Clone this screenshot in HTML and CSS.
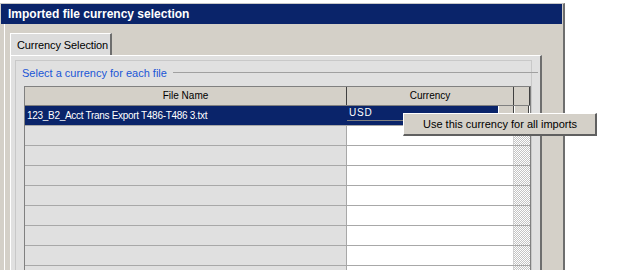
FILE: index.html
```html
<!DOCTYPE html>
<html>
<head>
<meta charset="utf-8">
<link rel="stylesheet" href="styles.css">
</head>
<body>
<div class="window">
  <div class="titlebar">Imported file currency selection</div>
  <div class="client">
    <div class="tabs">
      <div class="tab">Currency Selection</div>
    </div>
    <div class="panel">
      <div class="group">
        <div class="legend"><span class="legend-text">Select a currency for each file</span><span class="legend-line"></span></div>
        <div class="table">
          <div class="row head">
            <div class="c1">File Name</div>
            <div class="c2">Currency</div>
            <div class="c3"></div>
          </div>
          <div class="row sel">
            <div class="c1">123_B2_Acct Trans Export T486-T486 3.txt</div>
            <div class="c2"><span class="usd">USD</span><span class="dd"></span></div>
            <div class="c3 btn"></div>
          </div>
          <div class="row"><div class="c1"></div><div class="c2"></div><div class="c3 hatch"></div></div>
          <div class="row"><div class="c1"></div><div class="c2"></div><div class="c3 hatch"></div></div>
          <div class="row"><div class="c1"></div><div class="c2"></div><div class="c3 hatch"></div></div>
          <div class="row"><div class="c1"></div><div class="c2"></div><div class="c3 hatch"></div></div>
          <div class="row"><div class="c1"></div><div class="c2"></div><div class="c3 hatch"></div></div>
          <div class="row"><div class="c1"></div><div class="c2"></div><div class="c3 hatch"></div></div>
          <div class="row"><div class="c1"></div><div class="c2"></div><div class="c3 hatch"></div></div>
          <div class="row"><div class="c1"></div><div class="c2"></div><div class="c3 hatch"></div></div>
        </div>
      </div>
    </div>
  </div>
</div>
<div class="menu">Use this currency for all imports</div>
</body>
</html>
```
FILE: styles.css
```css
html, body { margin: 0; padding: 0; background: #fff; overflow: hidden; }
body { font-family: "Liberation Sans", Arial, sans-serif; font-size: 11px; color: #000; width: 621px; height: 270px; position: relative; white-space: nowrap; }
.window {
  margin-top: 3px;
  width: 563px;
  height: 300px;
  background: #d4d0c8;
  border-top: 1px solid #c8c8c8;
  border-right: 2px solid #6e6e6e;
  display: flex;
  flex-direction: column;
}
.titlebar {
  height: 20px;
  line-height: 20px;
  background: #0a246a;
  color: #fff;
  font-weight: bold;
  font-size: 12px;
  padding-left: 7px;
  margin-left: 1px;
  margin-right: 1px;
}
.client {
  flex: 1;
  margin-left: 4px;
  border-left: 1px solid #fff;
  padding: 9px 21px 0 5px;
  display: flex;
  flex-direction: column;
}
.tabs { display: flex; height: 22px; }
.tab {
  width: 93px;
  height: 21px;
  border-top: 1px solid #fff;
  border-left: 1px solid #fff;
  border-right: 2px solid #6e6e6e;
  background: #dcdcdc;
  padding-left: 6px;
  line-height: 22px;
  font-size: 11px;
  letter-spacing: -0.1px;
  color: #000;
}
.panel {
  flex: 1;
  background: #e0e0e0;
  border-left: 1px solid #fff;
  border-top: 1px solid #fff;
  border-right: 2px solid #6e6e6e;
  padding: 4px 8px 0 4px;
  display: flex;
  flex-direction: column;
}
.group {
  flex: 1;
  border-left: 1px solid #c8c8c8;
  border-top: 1px solid #c8c8c8;
  border-right: 1px solid #c8c8c8;
  padding: 4px 1px 0 8px;
  display: flex;
  flex-direction: column;
}
.legend { display: flex; align-items: center; height: 15px; margin-left: -2px; margin-right: -8px; margin-bottom: 6px; }
.legend-text { color: #1a56d6; font-size: 11px; padding-right: 6px; }
.legend-line { flex: 1; height: 1px; background: #a0a0a0; }
.table {
  width: 505px;
  border-top: 1px solid #808080;
  border-left: 1px solid #808080;
  border-right: 1px solid #808080;
  background: #fff;
}
.row { display: flex; height: 19px; border-bottom: 1px solid #a8a8a8; }
.c1 { background: #e0e0e0; border-right: 1px solid #a8a8a8; line-height: 19px; padding-left: 2px; box-sizing: border-box; width: 322px; font-size: 10px; letter-spacing: -0.3px; }
.c2 { width: 166px; background: #fff; display: flex; }
.c3 { flex: 1; border-left: 1px solid #a8a8a8; }
.hatch { background: repeating-conic-gradient(#c4c4c4 0 25%, #fff 0 50%) 0 0 / 2px 2px; border-left: 1px solid #d0d0d0; }
.head { height: 18px; border-bottom: 1px solid #808080; }
.head .c1, .head .c2, .head .c3 { background: #d4d0c8; text-align: center; line-height: 18px; font-size: 10px; padding-left: 0; justify-content: center; letter-spacing: 0; }
.head .c1 { border-right: 1px solid #404040; }
.head .c2 { border-right: 1px solid #404040; }
.head .c3 { border-left: 0; border-right: 1px solid #404040; flex: none; width: 15px; }
.sel .c1 { background: #0a246a; color: #fff; border-right: 1px solid #0a246a; }
.sel .c2 { background: #0a246a; color: #fff; align-items: flex-start; border-right: 1px solid #404040; }
.usd { flex: 1; line-height: 13px; padding-left: 2px; font-size: 10px; letter-spacing: 0.8px; border-bottom: 1px solid #808080; height: 14px; }
.dd { width: 14px; height: 14px; background: #d4d0c8; border-left: 1px solid #fff; }
.btn { background: #d4d0c8; border-left: 0; border-right: 1px solid #404040; border-bottom: 1px solid #404040; margin: 0 1px 0 1px; }
.menu {
  position: absolute;
  left: 403px;
  top: 113px;
  width: 172px;
  height: 20px;
  background: #d4d0c8;
  border-top: 1px solid #fff;
  border-left: 1px solid #fff;
  border-right: 2px solid #606060;
  border-bottom: 2px solid #606060;
  padding-left: 19px;
  line-height: 20px;
  font-size: 11px;
  color: #000;
}
```
